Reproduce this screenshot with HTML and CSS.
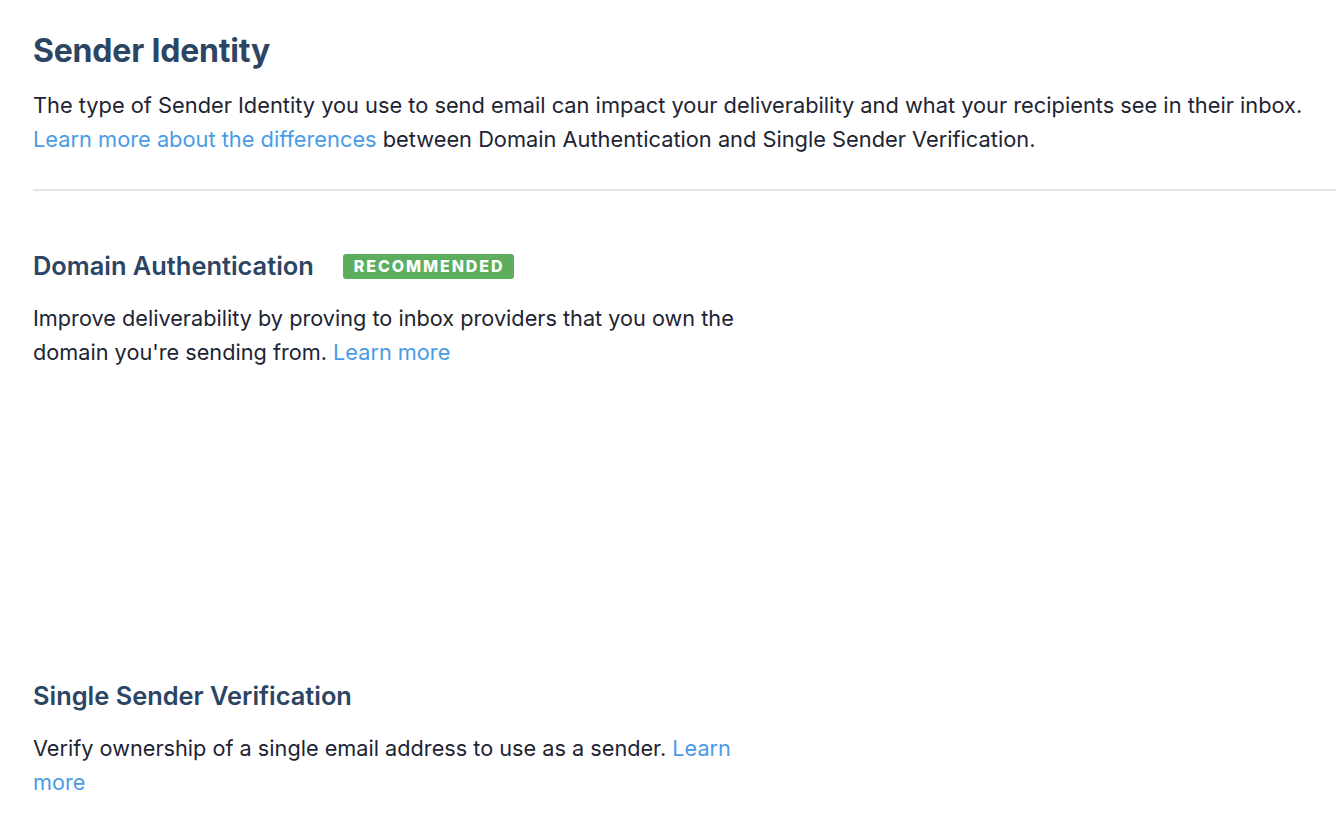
FILE: index.html
```html
<!DOCTYPE html>
<html lang="en">
<head>
<meta charset="utf-8">
<title>Sender Identity</title>
<link rel="stylesheet" href="styles.css">
</head>
<body>
<main class="page">
  <header class="intro">
    <h1 class="title">Sender Identity</h1>
    <p class="lead">The type of Sender Identity you use to send email can impact your deliverability and what your recipients see in their inbox. <a class="link" href="#">Learn more about the differences</a> between Domain Authentication and Single Sender Verification.</p>
  </header>
  <hr class="divider">
  <section class="section section-domain">
    <div class="section-head">
      <h2 class="section-title">Domain Authentication</h2>
      <span class="badge">Recommended</span>
    </div>
    <p class="section-text">Improve deliverability by proving to inbox providers that you own the domain you're sending from. <a class="link" href="#">Learn more</a></p>
  </section>
  <section class="section section-single">
    <div class="section-head">
      <h2 class="section-title">Single Sender Verification</h2>
    </div>
    <p class="section-text">Verify ownership of a single email address to use as a sender. <a class="link" href="#">Learn more</a></p>
  </section>
</main>
</body>
</html>
```
FILE: styles.css
```css
* { box-sizing: border-box; }
html, body { margin: 0; padding: 0; background: #fff; }
body {
  font-family: Inter, "Noto Sans", sans-serif;
  color: #1e2433;
  -webkit-font-smoothing: antialiased;
}
.page {
  padding: 31px 0 0 33px;
}
.title {
  margin: 0;
  font-size: 32px;
  line-height: 40px;
  font-weight: 700;
  color: #2c4563;
  letter-spacing: -0.2px;
}
.lead {
  margin: 17px 0 0;
  font-size: 21.8px;
  line-height: 34px;
}
.link {
  color: #4a9be6;
  text-decoration: none;
}
.divider {
  margin: 33px 0 0;
  border: 0;
  border-top: 2px solid #e1e5ea;
}
.section-domain { margin-top: 59px; }
.section-single { margin-top: 311px; }
.section-head {
  display: flex;
  align-items: center;
  gap: 29px;
}
.section-title {
  margin: 0;
  font-size: 25.4px;
  line-height: 32px;
  font-weight: 600;
  color: #2c4563;
}
.badge {
  background: #5cad5c;
  color: #fff;
  font-size: 16px;
  font-weight: 800;
  letter-spacing: 1.9px;
  text-transform: uppercase;
  padding: 3px 10px 3px 11px;
  border-radius: 3px;
  line-height: 19px;
}
.section-text {
  margin: 19px 0 0;
  max-width: 750px;
  font-size: 21.7px;
  line-height: 34px;
}
```
